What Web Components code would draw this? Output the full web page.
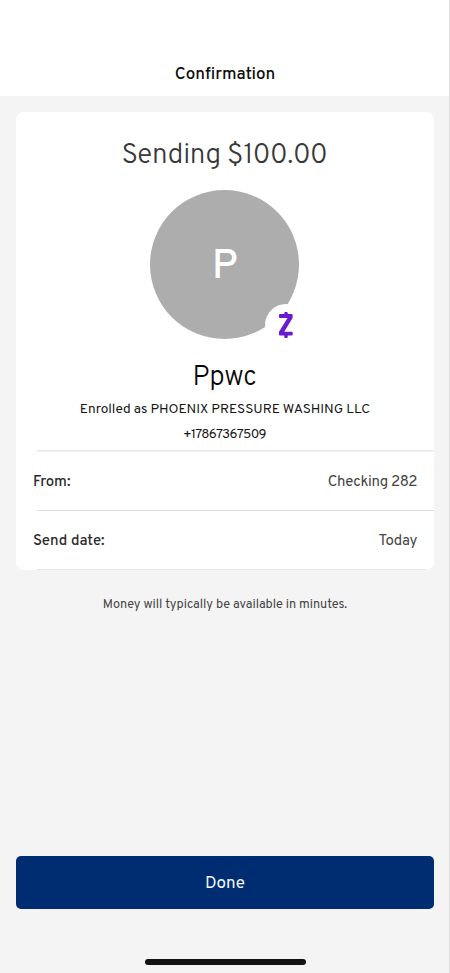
<!DOCTYPE html>
<html lang="en">
<head>
<meta charset="utf-8">
<title>Confirmation</title>
<style>
html,body{margin:0;height:100%}
body{font-family:Overpass,Roboto,"Liberation Sans",sans-serif;background:#f4f4f4;overflow:hidden}
</style>
</head>
<body>
<confirmation-screen>
  <nav-bar slot="header">Confirmation</nav-bar>
  <payment-card>
    <span slot="amount">Sending $100.00</span>
    <contact-avatar slot="avatar">P</contact-avatar>
    <span slot="name">Ppwc</span>
    <span slot="enrolled">Enrolled as PHOENIX PRESSURE WASHING LLC</span>
    <span slot="phone">+17867367509</span>
    <detail-row class="first"><span slot="label" style="letter-spacing:-.1px">From:</span><span style="letter-spacing:-.38px">Checking 282</span></detail-row>
    <detail-row><span slot="label" style="letter-spacing:0">Send date:</span><span style="letter-spacing:-.35px">Today</span></detail-row>
  </payment-card>
  <delivery-note>Money will typically be available in minutes.</delivery-note>
  <primary-button slot="footer">Done</primary-button>
  <home-indicator slot="footer"></home-indicator>
</confirmation-screen>
<script>
function define(name, html) {
  const template = document.createElement('template');
  template.innerHTML = html;
  customElements.define(name, class extends HTMLElement {
    constructor() {
      super();
      this.attachShadow({mode: 'open'}).append(template.content.cloneNode(true));
    }
  });
}

define('confirmation-screen', `<style>
:host{display:flex;flex-direction:column;height:973px;box-sizing:border-box;border-right:1px solid #dedede;background:#f4f4f4}
main{flex:1;padding:16px 15px 0 16px}
footer{padding:0 15px 8px 16px}
</style><slot name="header"></slot><main><slot></slot></main><footer><slot name="footer"></slot></footer>`);

define('nav-bar', `<style>
:host{display:block;box-sizing:border-box;height:96px;padding:65px 0 0 1px;background:#fff;text-align:center;font-size:17px;line-height:20px;font-weight:500;letter-spacing:.02px;color:#0c0c0c}
</style><slot></slot>`);

define('payment-card', `<style>
:host{display:flex;flex-direction:column;align-items:center;box-sizing:border-box;height:458px;padding-top:26px;background:#fff;border-radius:8px;text-align:center;white-space:nowrap;color:#161616}
.amount{font-size:28px;line-height:36px;font-weight:300;letter-spacing:-.35px;color:#383838;margin-right:1px}
.avatar{margin:15.5px .5px 0 0}
.name{margin:22px 1px 0 0;font-size:27.5px;line-height:36px;font-weight:300;letter-spacing:-.2px;color:#080808}
.enrolled{margin-top:1px;font-size:13.7px;line-height:24px;letter-spacing:-.04px}
.phone{margin-top:1px;font-size:13.4px;line-height:24px;letter-spacing:-.63px;margin-right:1px}
.rows{align-self:stretch;margin-top:3px}
</style>
<div class="amount"><slot name="amount"></slot></div>
<div class="avatar"><slot name="avatar"></slot></div>
<div class="name"><slot name="name"></slot></div>
<div class="enrolled"><slot name="enrolled"></slot></div>
<div class="phone"><slot name="phone"></slot></div>
<div class="rows"><slot></slot></div>`);

define('contact-avatar', `<style>
:host{display:block;position:relative;width:149px;height:149px;border-radius:50%;background:#adadad;color:#fff;font-size:41px;line-height:157px;font-weight:500;text-align:center}
.badge{position:absolute;left:114.5px;top:114px;width:42px;height:42px;border-radius:50%;background:#fff}
svg{display:block}
</style><slot></slot><span class="badge"><svg width="42" height="42" viewBox="0 0 42 42" fill="#6a1bd1"><rect x="19.3" y="8" width="3.4" height="5" rx=".9"/><rect x="19.3" y="29" width="3.4" height="5" rx=".9"/><path d="M15 10.1H26.6Q27.6 10.1 27.6 11.1V14.1L19.2 27.7H26.7Q27.7 27.7 27.7 28.7V30.6Q27.7 31.6 26.7 31.6H15Q14 31.6 14 30.6V27.8L22.5 14H15Q14 14 14 13V11.1Q14 10.1 15 10.1Z"/></svg></span>`);

define('detail-row', `<style>
:host{display:flex;justify-content:space-between;align-items:center;box-sizing:border-box;height:59.5px;padding:6px 17px 0;font-size:15px;line-height:20px;color:#444;background:linear-gradient(#dedede,#dedede) 21px 0/100% 1px no-repeat}
:host(.first){background-image:linear-gradient(#e6e6e6,#e6e6e6);background-size:100% 1.5px;height:60px}
.label{font-weight:500;color:#2b2b2b}
</style><span class="label"><slot name="label"></slot></span><span><slot></slot></span>`);

define('delivery-note', `<style>
:host{display:block;margin-top:25px;text-align:center;font-size:12.7px;line-height:20px;letter-spacing:-.03px;color:#444;white-space:nowrap}
:host::before{content:"";display:block;height:1px;margin:-26px 8px 25px 21px;background:#e4e4e4}
</style><slot></slot>`);

define('primary-button', `<style>
:host{display:block}
button{display:block;width:100%;height:53px;padding:3px 0 0;border:0;border-radius:5px;background:#002d72;color:#f2f7ff;font:400 17px/20px Overpass,Roboto,"Liberation Sans",sans-serif}
</style><button><slot></slot></button>`);

define('home-indicator', `<style>
:host{display:block;width:161px;height:6px;margin:50px auto 0;border-radius:3px;background:#121212}
</style>`);
</script>
</body>
</html>
